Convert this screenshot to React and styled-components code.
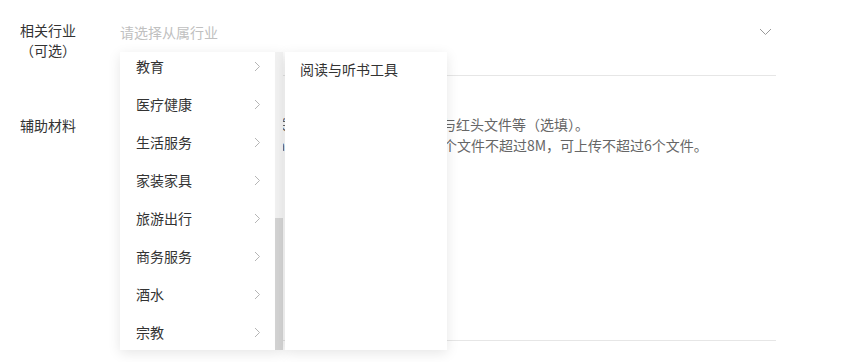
import React from 'react';
import styled, { createGlobalStyle } from 'styled-components';

const GlobalStyle = createGlobalStyle`
  html, body {
    margin: 0;
    padding: 0;
    background: #ffffff;
  }
  body {
    font-family: "Noto Sans CJK SC", "Noto Sans", sans-serif;
    font-size: 14px;
    color: #333333;
  }
`;

const Page = styled.div`
  width: 867px;
  height: 362px;
  overflow: hidden;
  padding-left: 20px;
  box-sizing: border-box;
`;

const FormRow = styled.div`
  display: flex;
  align-items: stretch;
`;

const LabelCol = styled.div`
  width: 100px;
  flex-shrink: 0;
  padding-top: ${(p) => p.$top}px;
`;

const LabelText = styled.div`
  display: inline-block;
  text-align: center;
  line-height: 20px;
  color: #333333;
`;

const Field = styled.div`
  position: relative;
  width: 656px;
  height: ${(p) => p.$height}px;
  padding-top: ${(p) => p.$top}px;
  box-sizing: border-box;
  border-bottom: 1px solid #e6e6e6;
`;

const SelectBox = styled.div`
  display: flex;
  align-items: center;
  justify-content: space-between;
  height: 24px;
  padding-right: 4px;
`;

const Placeholder = styled.span`
  color: #c0c0c0;
`;

const Hint = styled.p`
  margin: 0;
  line-height: 21px;
  color: #666666;
  white-space: nowrap;
`;

const Dropdown = styled.div`
  position: absolute;
  top: 52px;
  left: 0;
  display: flex;
  gap: 2px;
  z-index: 10;
`;

const Panel = styled.div`
  display: flex;
  width: ${(p) => p.$width}px;
  height: 298px;
  background: #ffffff;
  box-shadow: 0 3px 12px rgba(0, 0, 0, 0.1);
  overflow: hidden;
`;

const OptionList = styled.div`
  flex: 1;
  display: flex;
  flex-direction: column;
`;

const ScrollTrack = styled.div`
  width: 8px;
  flex-shrink: 0;
  background: #f1f1f1;
  display: flex;
  flex-direction: column;
  justify-content: flex-end;
`;

const ScrollThumb = styled.div`
  height: 132px;
  background: #d3d3d3;
`;

const Option = styled.div`
  display: flex;
  align-items: center;
  justify-content: space-between;
  flex-shrink: 0;
  height: 38px;
  box-sizing: border-box;
  padding: 0 14px ${(p) => p.$bottom}px ${(p) => p.$left}px;
  color: #333333;
  white-space: nowrap;
  cursor: pointer;
`;

const industries = [
  '教育', '医疗健康', '生活服务', '家装家具',
  '旅游出行', '商务服务', '酒水', '宗教',
];

const ChevronRight = () => (
  <svg width="7" height="11" viewBox="0 0 7 11" fill="none">
    <path d="M1 1l4.5 4.5L1 10" stroke="#b5b5b5" strokeWidth="1" />
  </svg>
);

const ChevronDown = () => (
  <svg width="13" height="8" viewBox="0 0 13 8" fill="none">
    <path d="M1 1l5.5 5.5L12 1" stroke="#9a9a9a" strokeWidth="1" />
  </svg>
);

const App = () => (
  <Page>
    <GlobalStyle />
    <FormRow>
      <LabelCol $top={20}>
        <LabelText>
          相关行业
          <br />
          （可选）
        </LabelText>
      </LabelCol>
      <Field $height={76} $top={20}>
        <SelectBox>
          <Placeholder>请选择从属行业</Placeholder>
          <ChevronDown />
        </SelectBox>
        <Dropdown>
          <Panel $width={163}>
            <OptionList>
              {industries.map((name) => (
                <Option key={name} $left={16} $bottom={10}>
                  {name}
                  <ChevronRight />
                </Option>
              ))}
            </OptionList>
            <ScrollTrack>
              <ScrollThumb />
            </ScrollTrack>
          </Panel>
          <Panel $width={162}>
            <OptionList>
              <Option $left={15} $bottom={4}>阅读与听书工具</Option>
            </OptionList>
          </Panel>
        </Dropdown>
      </Field>
    </FormRow>
    <FormRow>
      <LabelCol $top={39}>
        <LabelText>辅助材料</LabelText>
      </LabelCol>
      <Field $height={265} $top={38}>
        <Hint>请上传营业执照、行业相关资质证明、品牌授权证书与红头文件等（选填）。</Hint>
        <Hint>支持上传jpg、png、tif、ai等格式的图片或文件，单个文件不超过8M，可上传不超过6个文件。</Hint>
      </Field>
    </FormRow>
  </Page>
);

export default App;
